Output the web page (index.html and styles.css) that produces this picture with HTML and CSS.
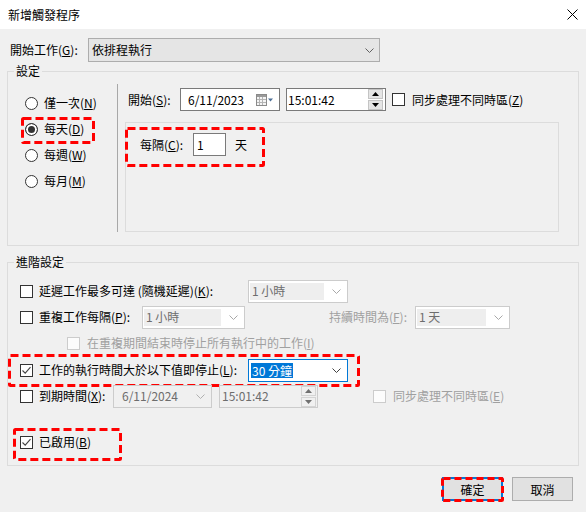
FILE: index.html
```html
<!DOCTYPE html>
<html lang="zh-Hant">
<head>
<meta charset="utf-8">
<title>新增觸發程序</title>
<link rel="stylesheet" href="styles.css">
</head>
<body>
<div class="titlebar">
  <span class="title">新增觸發程序</span>
  <svg class="close" width="11" height="11" viewBox="0 0 11 11"><path d="M0.5 0.5L10.5 10.5M10.5 0.5L0.5 10.5" stroke="#000" stroke-width="1"/></svg>
</div>

<div class="start-row">
  <span class="start-label">開始工作(<u>G</u>):</span>
  <div class="combo-main">
    <span>依排程執行</span>
    <svg class="chev" width="9" height="5" viewBox="0 0 9 5"><path d="M0.5 0.5L4.5 4.5L8.5 0.5" fill="none" stroke="#606060"/></svg>
  </div>
</div>

<div class="group group-settings">
  <div class="legend">設定</div>
  <div class="settings-body">
    <div class="freq">
      <div class="radio-row"><span class="radio"></span><span>僅一次(<u>N</u>)</span></div>
      <div class="radio-row"><span class="radio checked"></span><span>每天(<u>D</u>)</span>
        <svg class="hl hl-daily" width="74" height="27"><rect x="1.5" y="1.5" width="71" height="24" rx="1" fill="none" stroke="#f00" stroke-width="3" stroke-dasharray="8 4"/></svg>
      </div>
      <div class="radio-row"><span class="radio"></span><span>每週(<u>W</u>)</span></div>
      <div class="radio-row"><span class="radio"></span><span>每月(<u>M</u>)</span></div>
    </div>
    <div class="sched">
      <div class="sched-top">
        <span class="lbl-start">開始(<u>S</u>):</span>
        <div class="field date">
          <span class="val">6/11/2023</span>
          <svg class="cal" width="17" height="12" viewBox="0 0 17 12">
            <rect x="0.5" y="0.5" width="10" height="11" fill="#f4f4f4" stroke="#8a8a8a"/>
            <rect x="1" y="1" width="9" height="2" fill="#9a9a9a"/>
            <path d="M1 5.5H10M1 8.5H10M3.5 3V11M6.5 3V11" stroke="#b4b4b4"/>
            <path d="M12 4.5H17L14.5 7.5Z" fill="#4d6f96"/>
          </svg>
        </div>
        <div class="field time">
          <span class="val">15:01:42</span>
          <div class="spin">
            <span class="sp"><svg width="7" height="4" viewBox="0 0 7 4"><path d="M0 4H7L3.5 0Z" fill="#000"/></svg></span>
            <span class="sp"><svg width="7" height="4" viewBox="0 0 7 4"><path d="M0 0H7L3.5 4Z" fill="#000"/></svg></span>
          </div>
        </div>
        <span class="cb cb-sync"></span>
        <span>同步處理不同時區(<u>Z</u>)</span>
      </div>
      <div class="recur-panel">
        <div class="recur-row">
          <span class="lbl-every">每隔(<u>C</u>):</span>
          <div class="field num"><span class="val">1</span></div>
          <span class="unit">天</span>
          <svg class="hl hl-every" width="140" height="40"><rect x="1.5" y="1.5" width="137" height="37" rx="1" fill="none" stroke="#f00" stroke-width="3" stroke-dasharray="8 4"/></svg>
        </div>
      </div>
    </div>
  </div>
</div>

<div class="group group-adv">
  <div class="legend">進階設定</div>
  <div class="adv-rows">
    <div class="adv-row">
      <span class="cb"></span>
      <span class="lbl-long">延遲工作最多可達 (隨機延遲)(<u>K</u>):</span>
      <div class="combo-dis w100"><span class="sel">1 小時</span><svg class="chev" width="9" height="5" viewBox="0 0 9 5"><path d="M0.5 0.5L4.5 4.5L8.5 0.5" fill="none" stroke="#a8a8a8"/></svg></div>
    </div>
    <div class="adv-row">
      <span class="cb"></span>
      <span class="lbl-repeat">重複工作每隔(<u>P</u>):</span>
      <div class="combo-dis w103"><span class="sel">1 小時</span><svg class="chev" width="9" height="5" viewBox="0 0 9 5"><path d="M0.5 0.5L4.5 4.5L8.5 0.5" fill="none" stroke="#a8a8a8"/></svg></div>
      <span class="lbl-dur dis-text">持續時間為(<u>F</u>):</span>
      <div class="combo-dis w95"><span class="sel">1 天</span><svg class="chev" width="9" height="5" viewBox="0 0 9 5"><path d="M0.5 0.5L4.5 4.5L8.5 0.5" fill="none" stroke="#a8a8a8"/></svg></div>
    </div>
    <div class="adv-row">
      <span class="cb cb-dis cb-indent"></span>
      <span class="dis-text">在重複期間結束時停止所有執行中的工作(<u>I</u>)</span>
    </div>
    <div class="adv-row row-stop">
      <span class="cb"><svg width="11" height="11" viewBox="0 0 11 11"><path d="M1.5 5.5L4.2 8.2L9.5 2.2" fill="none" stroke="#444" stroke-width="1.1"/></svg></span>
      <span class="lbl-long">工作的執行時間大於以下值即停止(<u>L</u>):</span>
      <div class="combo-active"><span class="selected">30 分鐘</span><svg class="chev" width="9" height="5" viewBox="0 0 9 5"><path d="M0.5 0.5L4.5 4.5L8.5 0.5" fill="none" stroke="#404040"/></svg></div>
      <svg class="hl hl-stop" width="352" height="33"><rect x="1.5" y="1.5" width="349" height="30" rx="1" fill="none" stroke="#f00" stroke-width="3" stroke-dasharray="8 4"/></svg>
    </div>
    <div class="adv-row">
      <span class="cb"></span>
      <span class="lbl-exp">到期時間(<u>X</u>):</span>
      <div class="field-dis date2"><span class="val">6/11/2024</span><svg class="chev" width="9" height="5" viewBox="0 0 9 5"><path d="M0.5 0.5L4.5 4.5L8.5 0.5" fill="none" stroke="#b0b0b0"/></svg></div>
      <div class="field-dis time2">
        <span class="val">15:01:42</span>
        <div class="spin spin-dis">
          <span class="sp"><svg width="7" height="4" viewBox="0 0 7 4"><path d="M0 4H7L3.5 0Z" fill="#707070"/></svg></span>
          <span class="sp"><svg width="7" height="4" viewBox="0 0 7 4"><path d="M0 0H7L3.5 4Z" fill="#707070"/></svg></span>
        </div>
      </div>
      <span class="cb cb-dis cb-sync2"></span>
      <span class="dis-text">同步處理不同時區(<u>E</u>)</span>
    </div>
    <div class="adv-row row-enabled">
      <span class="cb"><svg width="11" height="11" viewBox="0 0 11 11"><path d="M1.5 5.5L4.2 8.2L9.5 2.2" fill="none" stroke="#444" stroke-width="1.1"/></svg></span>
      <span>已啟用(<u>B</u>)</span>
      <svg class="hl hl-enabled" width="109" height="33"><rect x="1.5" y="1.5" width="106" height="30" rx="1" fill="none" stroke="#f00" stroke-width="3" stroke-dasharray="8 4"/></svg>
    </div>
  </div>
</div>

<div class="buttons">
  <button class="btn btn-default">確定
    <svg class="hl hl-ok" width="63" height="25"><rect x="1.5" y="1.5" width="60" height="22" rx="1" fill="none" stroke="#f00" stroke-width="3" stroke-dasharray="7 4"/></svg>
  </button>
  <button class="btn">取消</button>
</div>
</body>
</html>
```

FILE: styles.css
```css
* { box-sizing: border-box; }

body {
  margin: 0;
  width: 586px;
  height: 512px;
  overflow: hidden;
  background: #f0f0f0;
  font-family: "Noto Sans CJK TC", "Noto Sans", sans-serif;
  font-size: 12px;
  line-height: 16px;
  color: #000;
}

u { text-decoration: underline; text-underline-offset: 1px; }

.titlebar {
  height: 29px;
  background: #fff;
  display: flex;
  align-items: center;
  justify-content: space-between;
  padding: 0 8px;
}

.start-row {
  display: flex;
  align-items: center;
  height: 24px;
  margin-top: 9px;
  padding-left: 10px;
}
.start-label { width: 78px; }
.combo-main {
  width: 292px;
  height: 24px;
  background: #e5e5e5;
  border: 1px solid #adadad;
  display: flex;
  align-items: center;
  justify-content: space-between;
  padding: 0 5px 0 3px;
}

.chev { flex: none; }

.group {
  margin: 0 7px;
  border: 1px solid #dcdcdc;
}
.group-settings { margin-top: 9px; height: 175px; }
.group-adv { margin-top: 16px; height: 204px; }

.legend {
  width: fit-content;
  margin: -9px 0 0 6px;
  padding: 0 2px;
  background: #f0f0f0;
  line-height: 16px;
}

.settings-body {
  display: flex;
  margin-top: 5px;
  height: 148px;
}
.freq {
  width: 110px;
  flex: none;
  border-right: 1px solid #a8a8a8;
  padding: 6px 0 0 17px;
}
.radio-row {
  position: relative;
  display: flex;
  align-items: center;
  gap: 6px;
  height: 26px;
}
.radio {
  width: 13px;
  height: 13px;
  border: 1px solid #333;
  border-radius: 50%;
  background: #fff;
  flex: none;
}
.radio.checked {
  background: #333;
  box-shadow: inset 0 0 0 2px #fff;
}

.hl { position: absolute; overflow: visible; pointer-events: none; }
.hl-daily { left: -4px; top: 1px; }
.hl-every { left: -15px; top: -6px; }
.hl-stop { left: -12px; top: -3px; }
.hl-enabled { left: -7px; top: -1px; }
.hl-ok { left: -2px; top: -1px; }

.sched {
  flex: 1;
  padding: 4px 0 0 10px;
}
.sched-top {
  display: flex;
  align-items: center;
  height: 23px;
}
.lbl-start { width: 52px; }

.field {
  height: 23px;
  border: 1px solid #7a7a7a;
  background: #fff;
  display: flex;
  align-items: center;
  flex: none;
}
.date { width: 100px; padding: 0 6px 0 7px; justify-content: space-between; margin-right: 6px; }
.time { width: 100px; padding: 0 2px 0 1px; justify-content: space-between; }
.num { width: 33px; padding-left: 3px; }

.spin {
  display: flex;
  flex-direction: column;
  gap: 1px;
}
.sp {
  width: 15px;
  height: 10px;
  background: #e5e5e5;
  border: 1px solid #c4c4c4;
  display: flex;
  align-items: center;
  justify-content: center;
}

.cb {
  width: 13px;
  height: 13px;
  border: 1px solid #333;
  background: #fff;
  flex: none;
  margin-right: 6px;
  display: flex;
  align-items: center;
  justify-content: center;
}
.cb-sync { margin-left: 6px; margin-right: 7px; }
.cb-dis { border-color: #cccccc; background: #fcfcfc; }
.cb-indent { margin-left: 47px; margin-right: 7px; }
.cb-sync2 { margin-left: 55px; margin-right: 7px; }

.recur-panel {
  margin: 11px 0 0 -3px;
  width: 434px;
  height: 110px;
  border: 1px solid #dcdcdc;
  padding: 10px 0 0 14px;
}
.recur-row {
  position: relative;
  display: flex;
  align-items: center;
  height: 23px;
}
.lbl-every { width: 53px; }
.unit { margin-left: 9px; }

.adv-rows {
  margin-top: 8px;
  padding-left: 12px;
}
.adv-row {
  position: relative;
  display: flex;
  align-items: center;
  height: 26px;
}
.row-stop { margin-top: 1px; }
.row-enabled { margin-top: 20px; }

.lbl-long { width: 209px; white-space: nowrap; }
.lbl-repeat { width: 103px; white-space: nowrap; }
.lbl-exp { width: 74px; white-space: nowrap; }
.lbl-dur { width: 162px; text-align: right; padding-right: 0; margin-right: 8px; }

.dis-text { color: #a0a0a0; }

.combo-dis {
  height: 23px;
  border: 1px solid #cccccc;
  background: #fff;
  display: flex;
  align-items: center;
  padding: 2px 6px 2px 1px;
  gap: 8px;
  flex: none;
}
.combo-dis .sel {
  flex: 1;
  align-self: stretch;
  background: #eeeeee;
  color: #6d6d6d;
  padding-left: 2px;
  display: flex;
  align-items: center;
}
.w100 { width: 100px; }
.w103 { width: 103px; }
.w95 { width: 95px; }

.combo-active {
  width: 100px;
  height: 23px;
  border: 1px solid #0078d7;
  background: #fff;
  display: flex;
  align-items: center;
  justify-content: space-between;
  padding: 0 6px 0 2px;
  flex: none;
}
.selected {
  background: #0078d7;
  color: #fff;
  padding: 0 1px 0 1px;
  line-height: 15px;
}

.field-dis {
  height: 23px;
  border: 1px solid #cccccc;
  background: #f0f0f0;
  display: flex;
  align-items: center;
  justify-content: space-between;
  color: #6d6d6d;
  flex: none;
}
.date2 { width: 99px; padding: 0 6px 0 8px; margin-right: 7px; }
.time2 { width: 99px; padding: 0 1px 0 2px; }
.spin-dis .sp { background: #f0f0f0; border-color: #d4d4d4; }

.buttons {
  display: flex;
  justify-content: flex-end;
  gap: 9px;
  margin-top: 11px;
  padding-right: 13px;
}
.btn {
  position: relative;
  width: 61px;
  height: 24px;
  background: #e1e1e1;
  border: 1px solid #adadad;
  font-family: "Noto Sans CJK TC", "Noto Sans", sans-serif;
  font-size: 12px;
  color: #000;
  padding: 0;
}
.btn-default {
  border-color: #0078d7;
  box-shadow: inset 0 0 0 1px #0078d7;
}
```
